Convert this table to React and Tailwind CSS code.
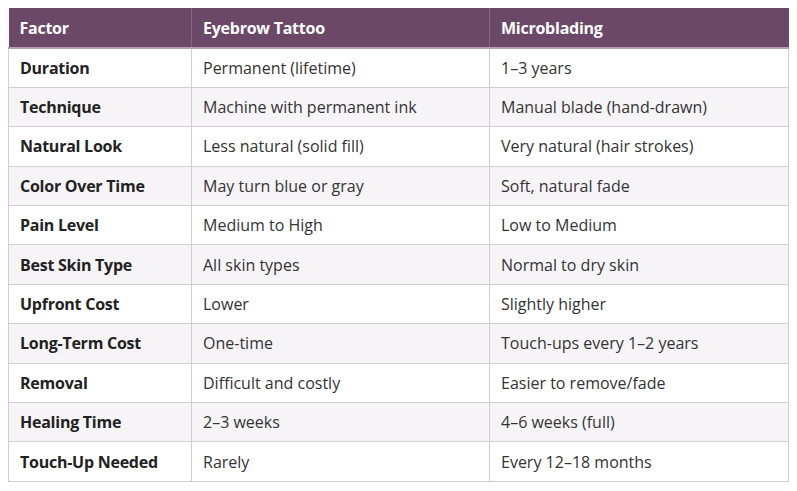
import React from 'react'

const rows = [
    ['Duration', 'Permanent (lifetime)', '1–3 years'],
    ['Technique', 'Machine with permanent ink', 'Manual blade (hand-drawn)'],
    ['Natural Look', 'Less natural (solid fill)', 'Very natural (hair strokes)'],
    ['Color Over Time', 'May turn blue or gray', 'Soft, natural fade'],
    ['Pain Level', 'Medium to High', 'Low to Medium'],
    ['Best Skin Type', 'All skin types', 'Normal to dry skin'],
    ['Upfront Cost', 'Lower', 'Slightly higher'],
    ['Long-Term Cost', 'One-time', 'Touch-ups every 1–2 years'],
    ['Removal', 'Difficult and costly', 'Easier to remove/fade'],
    ['Healing Time', '2–3 weeks', '4–6 weeks (full)'],
    ['Touch-Up Needed', 'Rarely', 'Every 12–18 months'],
]

const App = () => {
    return (
        <div className="bg-white w-[797px] h-[491px] pt-2 pl-2" style={{ fontFamily: '"Open Sans", Lato, sans-serif' }}>
            <table className="w-[780px] border-collapse text-[16px] leading-[22px] table-fixed">
                <colgroup>
                    <col className="w-[183px]" />
                    <col className="w-[298px]" />
                    <col className="w-[299px]" />
                </colgroup>
                <thead>
                    <tr className="bg-[#6b4868] text-white h-[40px] border-b-2 border-[#b29fb1] tracking-[-0.25px]">
                        <th className="text-left font-bold px-[11px] pt-px border-r border-[#86687f]">Factor</th>
                        <th className="text-left font-bold px-[11px] pt-px border-r border-[#86687f]">Eyebrow Tattoo</th>
                        <th className="text-left font-bold px-[11px] pt-px">Microblading</th>
                    </tr>
                </thead>
                <tbody className="text-[#333]">
                    {rows.map((r, i) => (
                        <tr key={r[0]} className={`h-[39.4px] ${i % 2 ? 'bg-[#f7f4f8]' : 'bg-white'}`}>
                            <td className="px-[11px] font-bold tracking-[-0.25px] text-[#222] border border-[#d0ced0]">{r[0]}</td>
                            <td className="px-[11px] border border-[#d0ced0]">{r[1]}</td>
                            <td className="px-[11px] border border-[#d0ced0]">{r[2]}</td>
                        </tr>
                    ))}
                </tbody>
            </table>
        </div>
    )
}

export default App
